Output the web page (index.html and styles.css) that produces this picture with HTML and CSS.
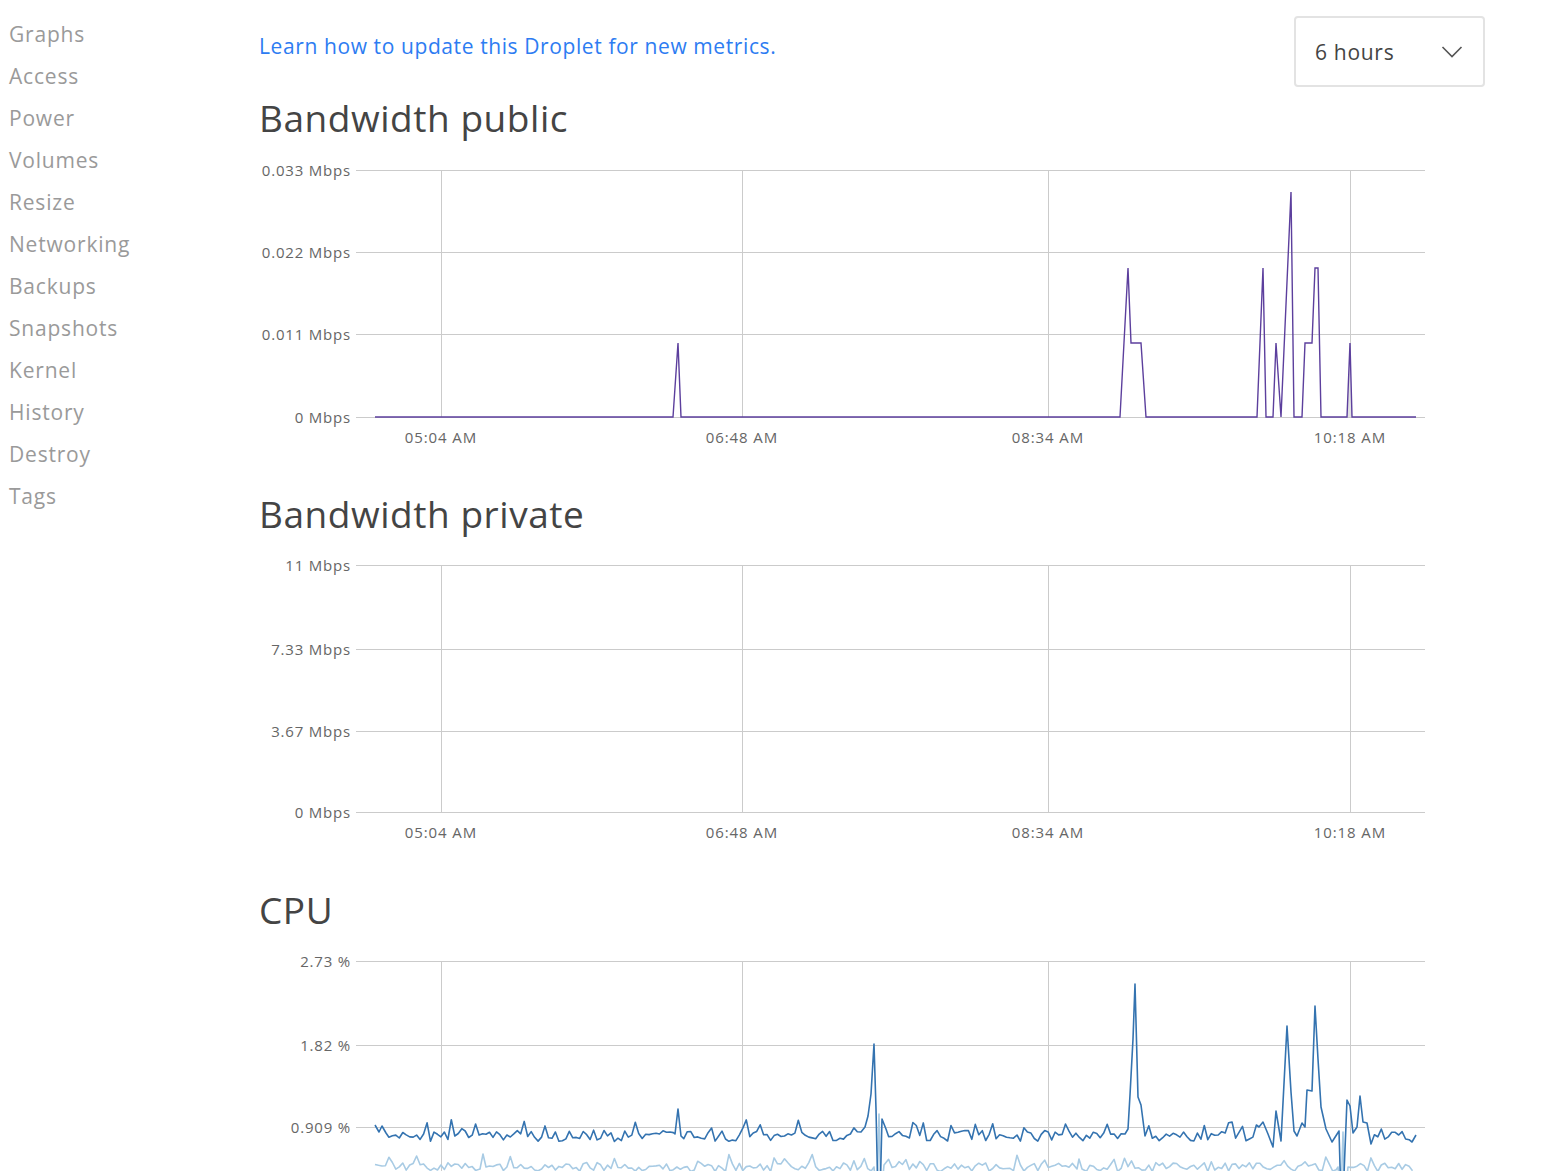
FILE: index.html
```html
<!DOCTYPE html>
<html lang="en">
<head>
<meta charset="utf-8">
<title>Droplet Graphs</title>
<link rel="stylesheet" href="styles.css">
</head>
<body>
<div class="page">
  <nav class="sidebar">
    <a class="nav-item" href="#">Graphs</a>
    <a class="nav-item" href="#">Access</a>
    <a class="nav-item" href="#">Power</a>
    <a class="nav-item" href="#">Volumes</a>
    <a class="nav-item" href="#">Resize</a>
    <a class="nav-item" href="#">Networking</a>
    <a class="nav-item" href="#">Backups</a>
    <a class="nav-item" href="#">Snapshots</a>
    <a class="nav-item" href="#">Kernel</a>
    <a class="nav-item" href="#">History</a>
    <a class="nav-item" href="#">Destroy</a>
    <a class="nav-item" href="#">Tags</a>
  </nav>
  <main class="main">
    <div class="topbar">
      <a class="learn-link" href="#">Learn how to update this Droplet for new metrics.</a>
      <div class="select">
        <span class="select-label">6 hours</span>
        <svg class="chevron" width="22" height="14" viewBox="0 0 22 14"><polyline points="1.5,2 11,11.5 20.5,2" fill="none" stroke="#555" stroke-width="1.6"/></svg>
      </div>
    </div>

    <section class="chart">
      <h2 class="chart-title">Bandwidth public</h2>
      <svg class="chart-svg" width="1166" height="350" viewBox="0 0 1166 350">
        <g class="grid">
          <line x1="97" y1="29.5" x2="1166" y2="29.5"/>
          <line x1="97" y1="111.5" x2="1166" y2="111.5"/>
          <line x1="97" y1="193.5" x2="1166" y2="193.5"/>
          <line x1="97" y1="276.5" x2="1166" y2="276.5"/>
          <line x1="182.5" y1="29" x2="182.5" y2="277"/>
          <line x1="483.5" y1="29" x2="483.5" y2="277"/>
          <line x1="789.5" y1="29" x2="789.5" y2="277"/>
          <line x1="1091.5" y1="29" x2="1091.5" y2="277"/>
        </g>
        <g class="ylabels">
          <text x="92" y="34.5">0.033 Mbps</text>
          <text x="92" y="116.5">0.022 Mbps</text>
          <text x="92" y="198.5">0.011 Mbps</text>
          <text x="92" y="281.5">0 Mbps</text>
        </g>
        <g class="xlabels">
          <text x="182" y="301.5">05:04 AM</text>
          <text x="483" y="301.5">06:48 AM</text>
          <text x="789" y="301.5">08:34 AM</text>
          <text x="1091" y="301.5">10:18 AM</text>
        </g>
        <g transform="translate(-259,-141)">
          <polygon class="area" points="1347,417 1350,343 1352,417"/>
          <polyline class="line-purple" points="375,417 673,417 678,343 681,417 1120,417 1128,268 1131,343 1141,343 1146,417 1257,417 1263,268 1266,417 1273,417 1276,343 1281,417 1291,192 1294,417 1302,417 1305,343 1312,343 1315,268 1318,268 1321,417 1347,417 1350,343 1352,417 1416,417"/>
        </g>
      </svg>
    </section>

    <section class="chart">
      <h2 class="chart-title">Bandwidth private</h2>
      <svg class="chart-svg" width="1166" height="350" viewBox="0 0 1166 350">
        <g class="grid">
          <line x1="97" y1="28.5" x2="1166" y2="28.5"/>
          <line x1="97" y1="112.5" x2="1166" y2="112.5"/>
          <line x1="97" y1="194.5" x2="1166" y2="194.5"/>
          <line x1="97" y1="275.5" x2="1166" y2="275.5"/>
          <line x1="182.5" y1="28" x2="182.5" y2="276"/>
          <line x1="483.5" y1="28" x2="483.5" y2="276"/>
          <line x1="789.5" y1="28" x2="789.5" y2="276"/>
          <line x1="1091.5" y1="28" x2="1091.5" y2="276"/>
        </g>
        <g class="ylabels">
          <text x="92" y="33.5">11 Mbps</text>
          <text x="92" y="117.5">7.33 Mbps</text>
          <text x="92" y="199.5">3.67 Mbps</text>
          <text x="92" y="280.5">0 Mbps</text>
        </g>
        <g class="xlabels">
          <text x="182" y="300.5">05:04 AM</text>
          <text x="483" y="300.5">06:48 AM</text>
          <text x="789" y="300.5">08:34 AM</text>
          <text x="1091" y="300.5">10:18 AM</text>
        </g>
      </svg>
    </section>

    <section class="chart">
      <h2 class="chart-title">CPU</h2>
      <svg class="chart-svg chart-svg-cpu" width="1166" height="238" viewBox="0 0 1166 238">
        <g class="grid">
          <line x1="97" y1="28.5" x2="1166" y2="28.5"/>
          <line x1="97" y1="112.5" x2="1166" y2="112.5"/>
          <line x1="97" y1="194.5" x2="1166" y2="194.5"/>
          <line x1="182.5" y1="28" x2="182.5" y2="238"/>
          <line x1="483.5" y1="28" x2="483.5" y2="238"/>
          <line x1="789.5" y1="28" x2="789.5" y2="238"/>
          <line x1="1091.5" y1="28" x2="1091.5" y2="238"/>
        </g>
        <g class="ylabels">
          <text x="92" y="33.5">2.73 %</text>
          <text x="92" y="117.5">1.82 %</text>
          <text x="92" y="199.5">0.909 %</text>
        </g>
        <g transform="translate(-259,-934)">
          <polyline id="cpu-light" class="line-light" points=""/>
          <polyline id="cpu-dark" class="line-dark" points=""/>
        </g>
      </svg>
    </section>
  </main>
</div>
<script src="script.js"></script>
</body>
</html>
```

FILE: styles.css
```css
html, body {
  margin: 0;
  padding: 0;
  background: #ffffff;
}

body {
  font-family: "Open Sans", "Lato", "Liberation Sans", sans-serif;
  color: #444444;
  overflow: hidden;
}

.page {
  display: flex;
  align-items: flex-start;
}

.sidebar {
  width: 250px;
  padding: 13px 0 0 9px;
  display: flex;
  flex-direction: column;
  flex-shrink: 0;
}

.nav-item {
  font-size: 21px;
  line-height: 42px;
  letter-spacing: 0.8px;
  color: #9a9a9a;
  text-decoration: none;
}

.main {
  flex: 1;
  padding: 16px 59px 0 0;
  min-width: 0;
}

.topbar {
  display: flex;
  justify-content: space-between;
  align-items: flex-start;
  height: 71px;
  margin-bottom: 8px;
}

.learn-link {
  margin-top: 15px;
  font-size: 21px;
  line-height: 30px;
  letter-spacing: 0.6px;
  color: #2d7cf2;
  text-decoration: none;
}

.select {
  box-sizing: border-box;
  width: 191px;
  height: 71px;
  border: 2px solid #e3e3e3;
  border-radius: 4px;
  display: flex;
  align-items: center;
  justify-content: space-between;
  padding: 0 20px 0 19px;
}

.select-label {
  font-size: 21px;
  letter-spacing: 0.7px;
  color: #444;
}

.chevron {
  display: block;
}

.chart {
  display: flex;
  flex-direction: column;
}

.chart-title {
  margin: 0;
  font-size: 37px;
  line-height: 46px;
  letter-spacing: 0.55px;
  font-weight: 400;
  color: #444;
}

.chart-svg {
  display: block;
}

.grid line {
  stroke: #cbcbcb;
  stroke-width: 1;
}

.ylabels text {
  font-family: "Open Sans", "Lato", "Liberation Sans", sans-serif;
  font-size: 15px;
  letter-spacing: 0.8px;
  fill: #666;
  text-anchor: end;
}

.xlabels text {
  font-family: "Open Sans", "Lato", "Liberation Sans", sans-serif;
  font-size: 15px;
  letter-spacing: 0.9px;
  fill: #666;
  text-anchor: middle;
}

.line-purple {
  fill: none;
  stroke: #5c3f9d;
  stroke-width: 1.4;
  stroke-linejoin: miter;
}

.area {
  fill: #e2e2e2;
}

.line-dark {
  fill: none;
  stroke: #3473b0;
  stroke-width: 1.6;
  stroke-linejoin: round;
}

.line-light {
  fill: none;
  stroke: #a8cbe4;
  stroke-width: 1.6;
  stroke-linejoin: round;
}
```

FILE: script.js
```js
(function () {
  function rng(seed) {
    return function () {
      seed |= 0;
      seed = (seed + 0x6D2B79F5) | 0;
      var t = Math.imul(seed ^ (seed >>> 15), 1 | seed);
      t = (t + Math.imul(t ^ (t >>> 7), 61 | t)) ^ t;
      return ((t ^ (t >>> 14)) >>> 0) / 4294967296;
    };
  }

  function build(base, amp, spikeProb, spikeAmp, special, seed) {
    var r = rng(seed);
    var ranges = [];
    special.forEach(function (group) {
      ranges.push([group[0][0] - 1.5, group[group.length - 1][0] + 1.5]);
    });
    var pts = [];
    for (var x = 375; x <= 1416; x += 3.47) {
      var inRange = ranges.some(function (rg) { return x >= rg[0] && x <= rg[1]; });
      var y = base + (r() - 0.5) * amp;
      if (r() < spikeProb) y -= spikeAmp * (0.5 + r() * 0.5);
      if (!inRange) pts.push([x, y]);
    }
    special.forEach(function (group) { group.forEach(function (p) { pts.push(p); }); });
    pts.sort(function (a, b) { return a[0] - b[0]; });
    return pts.map(function (p) { return p[0].toFixed(1) + "," + p[1].toFixed(1); }).join(" ");
  }

  var darkSpecial = [
    [[375, 1126], [379, 1133], [382, 1127], [386, 1134]],
    [[675, 1135], [678, 1110], [681, 1137]],
    [[861, 1133], [865, 1128], [868, 1117], [871, 1095], [874, 1045], [876, 1110], [878, 1200], [880, 1200], [882, 1120], [886, 1130]],
    [[1125, 1135], [1128, 1130], [1130, 1096], [1133, 1040], [1135, 985], [1138, 1098], [1141, 1106], [1145, 1137]],
    [[1259, 1128], [1263, 1123], [1268, 1135], [1273, 1148], [1276, 1112], [1281, 1142], [1287, 1027], [1291, 1093],
     [1294, 1132], [1297, 1137], [1302, 1124], [1305, 1128], [1307, 1091], [1312, 1092], [1315, 1007], [1318, 1060],
     [1321, 1108], [1326, 1130], [1332, 1143], [1339, 1132], [1341, 1200], [1343, 1200], [1347, 1101], [1350, 1107],
     [1353, 1134], [1357, 1128], [1360, 1097], [1363, 1123], [1367, 1124], [1371, 1145]],
    [[1412, 1143], [1416, 1136]]
  ];

  var lightSpecial = [
    [[480, 1170], [483, 1155], [486, 1168]],
    [[874, 1168], [877, 1200], [879, 1115], [881, 1200], [884, 1166]],
    [[1077, 1170], [1079, 1160], [1082, 1170]],
    [[1338, 1168], [1341, 1200], [1343, 1133], [1345, 1200], [1348, 1168]]
  ];

  document.getElementById("cpu-dark").setAttribute("points", build(1137, 11, 0.1, 12, darkSpecial, 11));
  document.getElementById("cpu-light").setAttribute("points", build(1168, 9, 0.12, 9, lightSpecial, 29));
})();
```
